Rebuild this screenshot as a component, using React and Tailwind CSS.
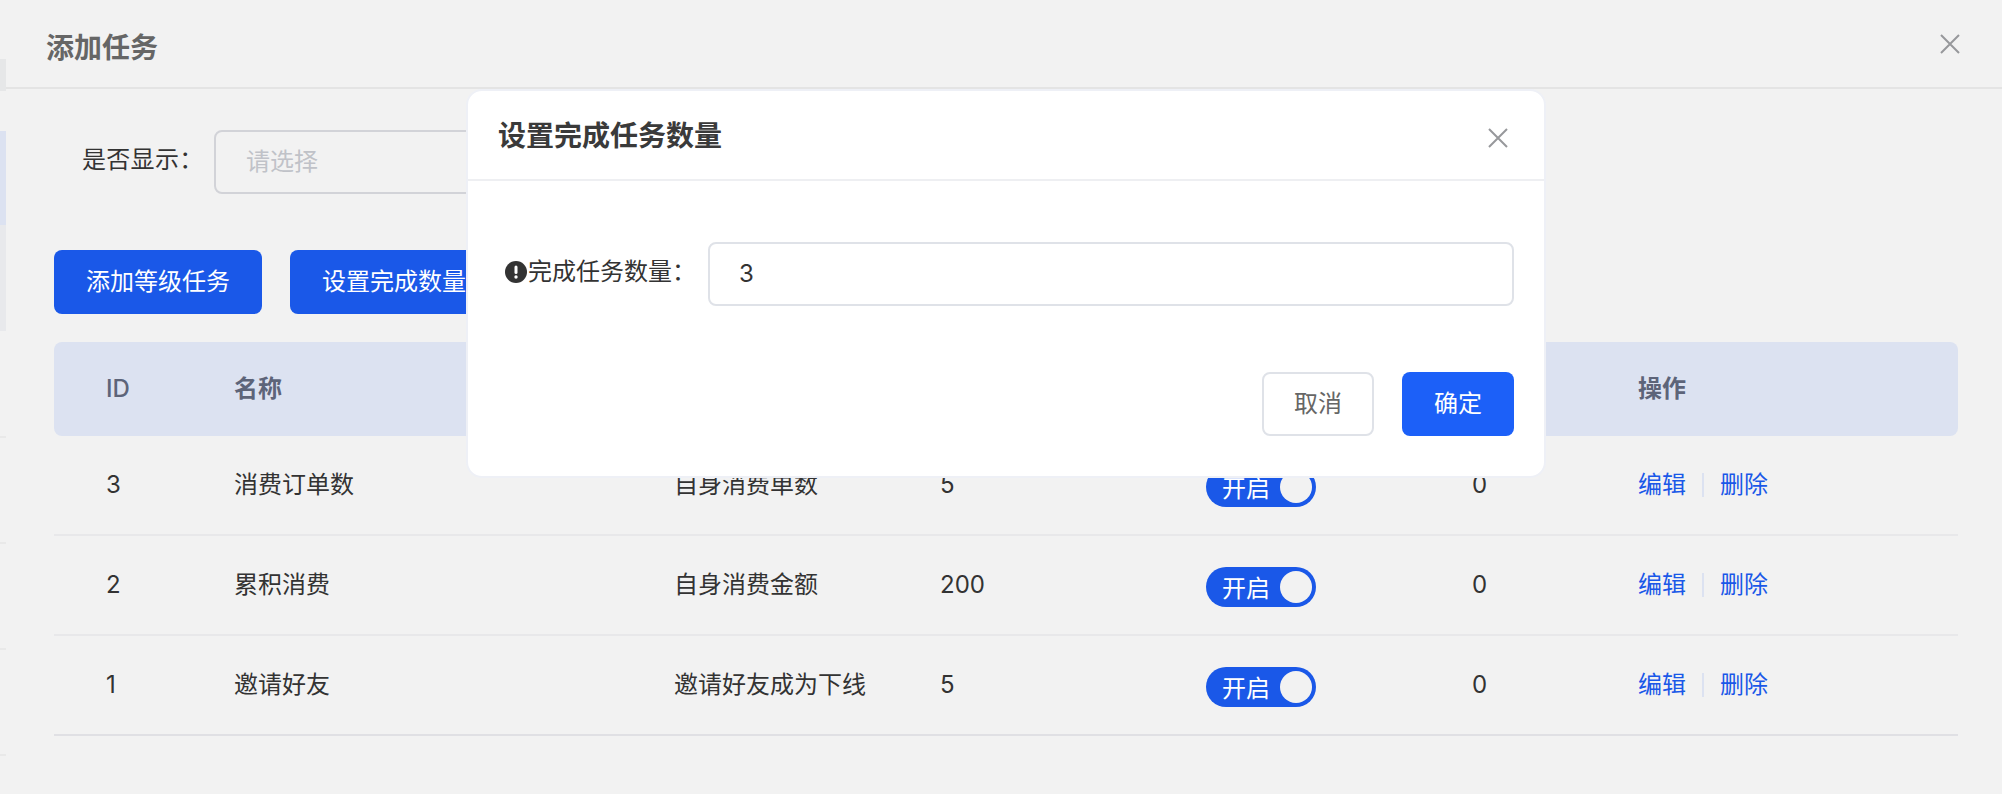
const rows = [
  { id: 3, name: "消费订单数", desc: "自身消费单数", target: 5 },
  { id: 2, name: "累积消费", desc: "自身消费金额", target: 200 },
  { id: 1, name: "邀请好友", desc: "邀请好友成为下线", target: 5 },
];

function CloseIcon() {
  return (
    <svg width="20" height="20" viewBox="0 0 20 20" fill="none" stroke="#97989b" strokeWidth="2">
      <path d="M1 1l18 18M19 1L1 19" />
    </svg>
  );
}

function Switch() {
  return (
    <div className="w-[110px] h-[40px] rounded-full bg-[#1a58e8] flex items-center justify-between pl-[16px] pr-[4px]">
      <span className="text-white pt-[3px]">开启</span>
      <span className="w-[32px] h-[32px] rounded-full bg-[#f2f2f2]"></span>
    </div>
  );
}

function Row({ row, last }) {
  return (
    <div className={`h-[100px] border-b-2 pl-[52px] flex items-center text-[#333] ${last ? "border-[#e0e0e4]" : "border-[#e8e8ea]"}`}>
      <div className="w-[129px]">{row.id}</div>
      <div className="w-[439px] -ml-[1px] mr-[1px]">{row.name}</div>
      <div className="w-[266px]">{row.desc}</div>
      <div className="w-[265px]">{row.target}</div>
      <div className="w-[267px] pt-[4px] pl-[1px]">
        <Switch />
      </div>
      <div className="w-[166px]">0</div>
      <div className="flex items-center text-[#1a58e8]">
        <a>编辑</a>
        <span className="w-[2px] h-[24px] bg-[#dce2f1] mx-[16px]"></span>
        <a>删除</a>
      </div>
    </div>
  );
}

export default function App() {
  return (
    <div className="relative h-[794px] overflow-hidden bg-[#f2f2f2] text-[24px] font-['Inter','Noto_Sans_CJK_SC',sans-serif] flex">
      {/* page behind the drawer */}
      <div className="w-[6px] shrink-0">
        <div className="h-[32px] mt-[59px] bg-[#e6e7e8]"></div>
        <div className="h-[94px] mt-[40px] bg-[#dce2f1]"></div>
        <div className="h-[106px] bg-[#e8e9ec]"></div>
        <div className="h-[2px] mt-[105px] bg-[#e9e9e9]"></div>
        <div className="h-[2px] mt-[104px] bg-[#e9e9e9]"></div>
        <div className="h-[2px] mt-[104px] bg-[#e9e9e9]"></div>
        <div className="h-[2px] mt-[104px] bg-[#e9e9e9]"></div>
      </div>

      <div className="flex-1">
        <div className="h-[89px] border-b-2 border-[#e4e4e4] pl-[40px] pr-[42px] flex items-center justify-between">
          <h2 className="text-[28px] font-bold text-[#666] pt-[8px]">添加任务</h2>
          <CloseIcon />
        </div>

        <div className="pl-[76px] mt-[41px] flex items-center">
          <span className="w-[132px] text-[#333] pb-[5px] tracking-[0.3px]">是否显示：</span>
          <div className="w-[320px] h-[64px] border-2 border-[#d2d3d8] rounded-[8px] pl-[30px] flex items-center text-[#c0c2c8]">
            请选择
          </div>
        </div>

        <div className="pl-[48px] mt-[56px] flex gap-[28px]">
          <button className="h-[64px] px-[32px] rounded-[8px] bg-[#1a58e8] text-white">添加等级任务</button>
          <button className="h-[64px] px-[32px] rounded-[8px] bg-[#1a58e8] text-white">设置完成数量</button>
        </div>

        <div className="ml-[48px] mr-[44px] mt-[28px]">
          <div className="h-[94px] rounded-[8px] bg-[#dce2f1] pl-[52px] flex items-center font-bold text-[#5d6479]">
            <div className="w-[1099px] flex">
              <div className="w-[128px] font-medium">ID</div>
              <div>名称</div>
            </div>
            <div className="ml-[433px]">操作</div>
          </div>
          {rows.map((row, i) => (
            <Row key={row.id} row={row} last={i === rows.length - 1} />
          ))}
        </div>
      </div>

      {/* modal */}
      <div className="absolute left-[466px] top-[89px] w-[1080px] h-[389px] rounded-[16px] border-2 border-[#eef0f6] bg-white">
        <div className="h-[90px] border-b-2 border-[#eeeff2] pl-[30px] pr-[36px] flex items-center justify-between">
          <h3 className="text-[28px] font-bold text-[#3a3a3a] pt-[1px]">设置完成任务数量</h3>
          <div className="mt-[6px]">
            <CloseIcon />
          </div>
        </div>

        <div className="pl-[37px] pr-[30px] mt-[61px] flex items-center">
          <label className="w-[203px] flex items-center text-[#333] pb-[5px]">
            <svg width="22" height="22" viewBox="0 0 22 22" className="shrink-0 mr-[1px]">
              <circle cx="11" cy="11" r="11" fill="#333" />
              <rect x="9.5" y="4.5" width="3" height="8.5" rx="1.5" fill="#fff" />
              <circle cx="11" cy="16" r="1.7" fill="#fff" />
            </svg>
            完成任务数量：
          </label>
          <div className="flex-1 h-[64px] border-2 border-[#dfe2e8] rounded-[8px] pl-[29px] flex items-center text-[#333]">
            3
          </div>
        </div>

        <div className="pr-[30px] mt-[66px] flex justify-end gap-[28px]">
          <button className="w-[112px] h-[64px] border-2 border-[#dfe2e8] rounded-[8px] text-[#666]">取消</button>
          <button className="w-[112px] h-[64px] rounded-[8px] bg-[#1c60f8] text-white">确定</button>
        </div>
      </div>
    </div>
  );
}
